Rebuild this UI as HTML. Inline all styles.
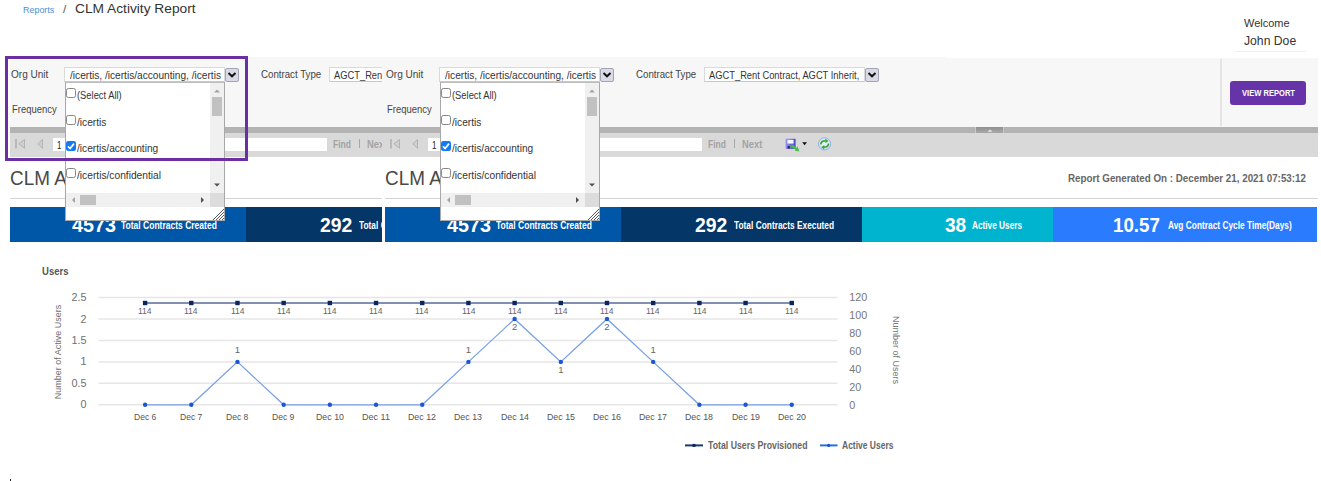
<!DOCTYPE html><html><head><meta charset="utf-8"><style>html,body{margin:0;padding:0;}body{width:1321px;height:481px;position:relative;overflow:hidden;background:#fff;font-family:"Liberation Sans",sans-serif;}.t{position:absolute;white-space:nowrap;transform-origin:0 50%;display:block;}.r{position:absolute;}</style></head><body>
<span class="t" style="left:22.90px;top:5.18px;font-size:9.59px;line-height:9.59px;color:#4a8ed8;transform:scaleX(0.9322);">Reports</span>
<span class="t" style="left:63.00px;top:3.46px;font-size:11.63px;line-height:11.63px;color:#555;">/</span>
<span class="t" style="left:75.00px;top:1.96px;font-size:13.52px;line-height:13.52px;color:#333;transform:scaleX(1.0162);">CLM Activity Report</span>
<span class="t" style="left:1243.50px;top:16.86px;font-size:11.63px;line-height:11.63px;color:#333;transform:scaleX(0.9429);">Welcome</span>
<span class="t" style="left:1243.50px;top:36.21px;font-size:11.92px;line-height:11.92px;color:#333;transform:scaleX(1.0233);">John Doe</span>
<div class="r" style="left:1235px;top:51px;width:71px;height:1px;background:#f0f0f0;"></div>
<div class="r" style="left:382px;top:57px;width:564px;height:70px;background:#f7f7f7;"></div>
<div class="r" style="left:946px;top:58px;width:372px;height:69px;background:#f7f7f7;"></div>
<div class="r" style="left:1220px;top:59px;width:2px;height:67px;background:#e4e4e4;"></div>
<div class="r" style="left:1230px;top:81px;width:76px;height:24px;background:#6633a9;border-radius:3px;"></div>
<span class="t" style="left:1241.50px;top:87.83px;font-size:9.88px;line-height:9.88px;color:#fff;font-weight:bold;transform:scaleX(0.7661);">VIEW REPORT</span>
<span class="t" style="left:386.00px;top:68.65px;font-size:11.05px;line-height:11.05px;color:#444;transform:scaleX(0.9089);">Org Unit</span>
<span class="t" style="left:386.60px;top:103.85px;font-size:11.05px;line-height:11.05px;color:#444;transform:scaleX(0.8545);">Frequency</span>
<span class="t" style="left:635.90px;top:68.65px;font-size:11.05px;line-height:11.05px;color:#444;transform:scaleX(0.8783);">Contract Type</span>
<div class="r" style="left:439px;top:67px;width:161px;height:15px;background:#fff;box-sizing:border-box;border:1px solid #dadada;border-bottom-color:#c8c8c8;"></div>
<div class="r" style="left:440px;top:67px;width:158px;height:15px;overflow:hidden;"><span class="t" style="left:4.60px;top:2.85px;font-size:11.05px;line-height:11.05px;color:#333;transform:scaleX(0.9177);">/icertis, /icertis/accounting, /icertis</span></div>
<div class="r" style="left:599.5px;top:67.5px;width:12px;height:12.4px;background:#dadae6;border:1px solid #a4a4b6;border-radius:2px;"></div><svg class="r" style="left:599.5px;top:67.5px" width="14" height="15" viewBox="0 0 14 15"><path d="M3.5 5.1 L7 8.3 L10.5 5.1" stroke="#111" stroke-width="2" fill="none"/></svg>
<div class="r" style="left:704px;top:67px;width:161px;height:15px;background:#fff;box-sizing:border-box;border:1px solid #dadada;border-bottom-color:#c8c8c8;"></div>
<div class="r" style="left:705px;top:67px;width:158px;height:15px;overflow:hidden;"><span class="t" style="left:4.00px;top:2.85px;font-size:11.05px;line-height:11.05px;color:#333;transform:scaleX(0.8451);">AGCT_Rent Contract, AGCT Inherit,</span></div>
<div class="r" style="left:865px;top:67.5px;width:12px;height:12.4px;background:#dadae6;border:1px solid #a4a4b6;border-radius:2px;"></div><svg class="r" style="left:865px;top:67.5px" width="14" height="15" viewBox="0 0 14 15"><path d="M3.5 5.1 L7 8.3 L10.5 5.1" stroke="#111" stroke-width="2" fill="none"/></svg>
<div class="r" style="left:382px;top:127px;width:936px;height:6px;background:#b3b3b3;"></div>
<div class="r" style="left:975px;top:127px;width:29px;height:6px;background:linear-gradient(#8f8f8f,#a9a9a9);box-sizing:border-box;border-left:1px solid #c8c8c8;border-right:1px solid #c8c8c8;"></div>
<svg class="r" style="left:985px;top:128px" width="10" height="5" viewBox="0 0 10 5"><path d="M2.5 3.8 L5 1.4 L7.5 3.8Z" fill="#e8e8e8"/></svg>
<div class="r" style="left:382px;top:133px;width:936px;height:24px;background:#d9d9d9;"></div>
<svg class="r" style="left:389px;top:138px" width="32" height="12" viewBox="0 0 32 12"><rect x="1" y="1" width="2" height="9.5" fill="#b9b9b9"/><path d="M10.5 1.5 L4.8 5.8 L10.5 10.2 Z" fill="#cfcfcf" stroke="#b4b4b4" stroke-width="1"/><path d="M28.5 1.5 L23.8 5.8 L28.5 10.2 Z" fill="#cfcfcf" stroke="#b4b4b4" stroke-width="1"/></svg>
<div class="r" style="left:427.5px;top:138px;width:17.5px;height:13px;background:#fff;"></div>
<span class="t" style="left:432.30px;top:138.66px;font-size:11.63px;line-height:11.63px;color:#222;transform:scaleX(0.6818);">1</span>
<div class="r" style="left:560px;top:138px;width:141.5px;height:13px;background:#fff;"></div>
<span class="t" style="left:708.00px;top:138.90px;font-size:10.76px;line-height:10.76px;color:#a3a3a3;font-weight:bold;transform:scaleX(0.7931);">Find</span>
<div class="r" style="left:734px;top:139px;width:1.2000000000000455px;height:9px;background:#a8a8a8;"></div>
<span class="t" style="left:742.00px;top:138.90px;font-size:10.76px;line-height:10.76px;color:#a3a3a3;font-weight:bold;transform:scaleX(0.8697);">Next</span>
<svg class="r" style="left:784px;top:137px" width="26" height="17" viewBox="0 0 26 17"><defs><linearGradient id="fg0" x1="0" x2="1" y1="0" y2="0"><stop offset="0" stop-color="#9494f2"/><stop offset="1" stop-color="#4848c4"/></linearGradient></defs><rect x="1.6" y="1.8" width="10" height="10.2" rx="0.6" fill="url(#fg0)"/><rect x="3.4" y="2.8" width="6.2" height="3.8" fill="#f6f6ff"/><rect x="3.6" y="9" width="2.2" height="2.6" fill="#2a2a60"/><path d="M5.8 9.4 L9 7.6 L12.2 11 L13.6 9.6 L15.4 14.6 L10.4 13.6 L11.6 12.4 Z" fill="#4cb84c"/><path d="M18.2 5.2 L23 5.2 L20.6 8.2Z" fill="#111"/></svg>
<svg class="r" style="left:817px;top:137px" width="16" height="16" viewBox="0 0 16 16"><defs><radialGradient id="rg0" cx="0.45" cy="0.4" r="0.6"><stop offset="0" stop-color="#f4f8fd"/><stop offset="1" stop-color="#c4d8f0"/></radialGradient></defs><circle cx="7.6" cy="6.9" r="6.1" fill="url(#rg0)" stroke="#94b4e2" stroke-width="1"/><path d="M3.6 7.4 C4 5 6 3.6 8.6 3.8" stroke="#3ea83e" stroke-width="1.7" fill="none"/><path d="M8.2 1.6 L11.4 3.9 L8.4 6.2Z" fill="#3ea83e"/><path d="M11.6 6.6 C11.2 9 9.4 10.2 7 10.2" stroke="#3ea83e" stroke-width="1.7" fill="none"/><path d="M7.2 8 L4.2 10.2 L7.2 12.4Z" fill="#3ea83e"/></svg>
<span class="t" style="left:385.20px;top:169.47px;font-size:19.77px;line-height:19.77px;color:#484848;transform:scaleX(0.9565);">CLM Activity Report</span>
<span class="t" style="left:1068.00px;top:172.36px;font-size:11.63px;line-height:11.63px;color:#666;font-weight:bold;transform:scaleX(0.8427);">Report Generated On : December 21, 2021 07:53:12</span>
<div class="r" style="left:385px;top:198px;width:933px;height:1px;background:#d3d3d3;"></div>
<div class="r" style="left:385px;top:207px;width:236px;height:35px;background:#0056a7;"></div>
<div class="r" style="left:621px;top:207px;width:241px;height:35px;background:#053668;"></div>
<div class="r" style="left:862px;top:207px;width:191px;height:35px;background:#00b4d0;"></div>
<div class="r" style="left:1053px;top:207px;width:264px;height:35px;background:#2b7bfe;"></div>
<span class="t" style="left:447.00px;top:215.42px;font-size:20.06px;line-height:20.06px;color:#fff;font-weight:bold;transform:scaleX(0.9837);">4573</span>
<span class="t" style="left:496.20px;top:220.59px;font-size:10.17px;line-height:10.17px;color:#fff;font-weight:bold;transform:scaleX(0.8380);">Total Contracts Created</span>
<span class="t" style="left:695.40px;top:215.42px;font-size:20.06px;line-height:20.06px;color:#fff;font-weight:bold;transform:scaleX(0.9672);">292</span>
<span class="t" style="left:733.50px;top:220.59px;font-size:10.17px;line-height:10.17px;color:#fff;font-weight:bold;transform:scaleX(0.8225);">Total Contracts Executed</span>
<span class="t" style="left:945.20px;top:215.42px;font-size:20.06px;line-height:20.06px;color:#fff;font-weight:bold;transform:scaleX(0.9522);">38</span>
<span class="t" style="left:972.00px;top:220.59px;font-size:10.17px;line-height:10.17px;color:#fff;font-weight:bold;transform:scaleX(0.8142);">Active Users</span>
<span class="t" style="left:1113.40px;top:215.42px;font-size:20.06px;line-height:20.06px;color:#fff;font-weight:bold;transform:scaleX(0.9334);">10.57</span>
<span class="t" style="left:1167.60px;top:220.59px;font-size:10.17px;line-height:10.17px;color:#fff;font-weight:bold;transform:scaleX(0.8213);">Avg Contract Cycle Time(Days)</span>
<div class="r" style="left:440px;top:82px;width:160px;height:139px;background:#fff;box-sizing:border-box;border:1px solid #a8a8a8;border-top-color:#bdbdbd;"></div>
<div class="r" style="left:440.5px;top:88.2px;width:8.2px;height:8px;border:1.1px solid #868686;border-radius:2.4px;background:#fff;"></div>
<span class="t" style="left:451.50px;top:89.95px;font-size:11.05px;line-height:11.05px;color:#333;transform:scaleX(0.8466);">(Select All)</span>
<div class="r" style="left:440.5px;top:115.2px;width:8.2px;height:8px;border:1.1px solid #868686;border-radius:2.4px;background:#fff;"></div>
<span class="t" style="left:451.50px;top:116.65px;font-size:11.05px;line-height:11.05px;color:#333;transform:scaleX(0.9178);">/icertis</span>
<div class="r" style="left:441.3px;top:141.4px;width:10.2px;height:10px;background:#1479f6;border-radius:2.2px;"></div><svg class="r" style="left:441.3px;top:141.4px" width="10" height="10" viewBox="0 0 10 10"><path d="M2 5.4 L4.1 7.5 L8 2.6" stroke="#fff" stroke-width="1.7" fill="none"/></svg>
<span class="t" style="left:451.50px;top:143.25px;font-size:11.05px;line-height:11.05px;color:#333;transform:scaleX(0.9183);">/icertis/accounting</span>
<div class="r" style="left:440.5px;top:167.7px;width:8.2px;height:8px;border:1.1px solid #868686;border-radius:2.4px;background:#fff;"></div>
<span class="t" style="left:451.50px;top:169.65px;font-size:11.05px;line-height:11.05px;color:#333;transform:scaleX(0.9245);">/icertis/confidential</span>
<div class="r" style="left:585px;top:83px;width:14px;height:110px;background:#f0f0f0;"></div>
<div class="r" style="left:587px;top:97px;width:10px;height:19px;background:#c1c1c1;"></div>
<svg class="r" style="left:585px;top:86px" width="14" height="104" viewBox="0 0 14 104"><path d="M4 6.5 L7 3.5 L10 6.5Z" fill="#a3a3a3"/><path d="M4 97.5 L7 100.5 L10 97.5Z" fill="#505050"/></svg>
<div class="r" style="left:441px;top:193px;width:144px;height:14px;background:#f0f0f0;"></div>
<div class="r" style="left:585px;top:193px;width:14px;height:14px;background:#dcdcdc;"></div>
<div class="r" style="left:454.5px;top:195px;width:16.5px;height:10px;background:#c1c1c1;"></div>
<svg class="r" style="left:441px;top:193px" width="144" height="14" viewBox="0 0 144 14"><path d="M9 4 L6 7 L9 10Z" fill="#a3a3a3"/><path d="M135 4 L138 7 L135 10Z" fill="#505050"/></svg>
<svg class="r" style="left:585px;top:207px" width="14" height="13" viewBox="0 0 14 13"><path d="M3 13 L14 2 M6 13 L14 5 M9 13 L14 8 M12 13 L14 11" stroke="#555" stroke-width="1"/></svg>
<div class="r" style="left:10px;top:50px;width:372px;height:200px;overflow:hidden;"><div class="r" style="left:-10px;top:-50px;width:1321px;height:481px;"><div class="r" style="left:7px;top:57px;width:564px;height:70px;background:#f7f7f7;"></div>
<div class="r" style="left:571px;top:58px;width:372px;height:69px;background:#f7f7f7;"></div>
<div class="r" style="left:845px;top:59px;width:2px;height:67px;background:#e4e4e4;"></div>
<div class="r" style="left:855px;top:81px;width:76px;height:24px;background:#6633a9;border-radius:3px;"></div>
<span class="t" style="left:866.50px;top:87.83px;font-size:9.88px;line-height:9.88px;color:#fff;font-weight:bold;transform:scaleX(0.7661);">VIEW REPORT</span>
<span class="t" style="left:11.00px;top:68.65px;font-size:11.05px;line-height:11.05px;color:#444;transform:scaleX(0.9089);">Org Unit</span>
<span class="t" style="left:11.60px;top:103.85px;font-size:11.05px;line-height:11.05px;color:#444;transform:scaleX(0.8545);">Frequency</span>
<span class="t" style="left:260.90px;top:68.65px;font-size:11.05px;line-height:11.05px;color:#444;transform:scaleX(0.8783);">Contract Type</span>
<div class="r" style="left:64px;top:67px;width:161px;height:15px;background:#fff;box-sizing:border-box;border:1px solid #dadada;border-bottom-color:#c8c8c8;"></div>
<div class="r" style="left:65px;top:67px;width:158px;height:15px;overflow:hidden;"><span class="t" style="left:4.60px;top:2.85px;font-size:11.05px;line-height:11.05px;color:#333;transform:scaleX(0.9177);">/icertis, /icertis/accounting, /icertis</span></div>
<div class="r" style="left:224.5px;top:67.5px;width:12px;height:12.4px;background:#dadae6;border:1px solid #a4a4b6;border-radius:2px;"></div><svg class="r" style="left:224.5px;top:67.5px" width="14" height="15" viewBox="0 0 14 15"><path d="M3.5 5.1 L7 8.3 L10.5 5.1" stroke="#111" stroke-width="2" fill="none"/></svg>
<div class="r" style="left:329px;top:67px;width:161px;height:15px;background:#fff;box-sizing:border-box;border:1px solid #dadada;border-bottom-color:#c8c8c8;"></div>
<div class="r" style="left:330px;top:67px;width:158px;height:15px;overflow:hidden;"><span class="t" style="left:4.00px;top:2.85px;font-size:11.05px;line-height:11.05px;color:#333;transform:scaleX(0.8451);">AGCT_Rent Contract, AGCT Inherit,</span></div>
<div class="r" style="left:490px;top:67.5px;width:12px;height:12.4px;background:#dadae6;border:1px solid #a4a4b6;border-radius:2px;"></div><svg class="r" style="left:490px;top:67.5px" width="14" height="15" viewBox="0 0 14 15"><path d="M3.5 5.1 L7 8.3 L10.5 5.1" stroke="#111" stroke-width="2" fill="none"/></svg>
<div class="r" style="left:7px;top:127px;width:936px;height:6px;background:#b3b3b3;"></div>
<div class="r" style="left:600px;top:127px;width:29px;height:6px;background:linear-gradient(#8f8f8f,#a9a9a9);box-sizing:border-box;border-left:1px solid #c8c8c8;border-right:1px solid #c8c8c8;"></div>
<svg class="r" style="left:610px;top:128px" width="10" height="5" viewBox="0 0 10 5"><path d="M2.5 3.8 L5 1.4 L7.5 3.8Z" fill="#e8e8e8"/></svg>
<div class="r" style="left:7px;top:133px;width:936px;height:24px;background:#d9d9d9;"></div>
<svg class="r" style="left:14px;top:138px" width="32" height="12" viewBox="0 0 32 12"><rect x="1" y="1" width="2" height="9.5" fill="#b9b9b9"/><path d="M10.5 1.5 L4.8 5.8 L10.5 10.2 Z" fill="#cfcfcf" stroke="#b4b4b4" stroke-width="1"/><path d="M28.5 1.5 L23.8 5.8 L28.5 10.2 Z" fill="#cfcfcf" stroke="#b4b4b4" stroke-width="1"/></svg>
<div class="r" style="left:52.5px;top:138px;width:17.5px;height:13px;background:#fff;"></div>
<span class="t" style="left:57.30px;top:138.66px;font-size:11.63px;line-height:11.63px;color:#222;transform:scaleX(0.6818);">1</span>
<div class="r" style="left:185px;top:138px;width:141.5px;height:13px;background:#fff;"></div>
<span class="t" style="left:333.00px;top:138.90px;font-size:10.76px;line-height:10.76px;color:#a3a3a3;font-weight:bold;transform:scaleX(0.7931);">Find</span>
<div class="r" style="left:359px;top:139px;width:1.2000000000000455px;height:9px;background:#a8a8a8;"></div>
<span class="t" style="left:367.00px;top:138.90px;font-size:10.76px;line-height:10.76px;color:#a3a3a3;font-weight:bold;transform:scaleX(0.8697);">Next</span>
<svg class="r" style="left:409px;top:137px" width="26" height="17" viewBox="0 0 26 17"><defs><linearGradient id="fg-375" x1="0" x2="1" y1="0" y2="0"><stop offset="0" stop-color="#9494f2"/><stop offset="1" stop-color="#4848c4"/></linearGradient></defs><rect x="1.6" y="1.8" width="10" height="10.2" rx="0.6" fill="url(#fg-375)"/><rect x="3.4" y="2.8" width="6.2" height="3.8" fill="#f6f6ff"/><rect x="3.6" y="9" width="2.2" height="2.6" fill="#2a2a60"/><path d="M5.8 9.4 L9 7.6 L12.2 11 L13.6 9.6 L15.4 14.6 L10.4 13.6 L11.6 12.4 Z" fill="#4cb84c"/><path d="M18.2 5.2 L23 5.2 L20.6 8.2Z" fill="#111"/></svg>
<svg class="r" style="left:442px;top:137px" width="16" height="16" viewBox="0 0 16 16"><defs><radialGradient id="rg-375" cx="0.45" cy="0.4" r="0.6"><stop offset="0" stop-color="#f4f8fd"/><stop offset="1" stop-color="#c4d8f0"/></radialGradient></defs><circle cx="7.6" cy="6.9" r="6.1" fill="url(#rg-375)" stroke="#94b4e2" stroke-width="1"/><path d="M3.6 7.4 C4 5 6 3.6 8.6 3.8" stroke="#3ea83e" stroke-width="1.7" fill="none"/><path d="M8.2 1.6 L11.4 3.9 L8.4 6.2Z" fill="#3ea83e"/><path d="M11.6 6.6 C11.2 9 9.4 10.2 7 10.2" stroke="#3ea83e" stroke-width="1.7" fill="none"/><path d="M7.2 8 L4.2 10.2 L7.2 12.4Z" fill="#3ea83e"/></svg>
<span class="t" style="left:10.20px;top:169.47px;font-size:19.77px;line-height:19.77px;color:#484848;transform:scaleX(0.9565);">CLM Activity Report</span>
<span class="t" style="left:693.00px;top:172.36px;font-size:11.63px;line-height:11.63px;color:#666;font-weight:bold;transform:scaleX(0.8427);">Report Generated On : December 21, 2021 07:53:12</span>
<div class="r" style="left:10px;top:198px;width:933px;height:1px;background:#d3d3d3;"></div>
<div class="r" style="left:10px;top:207px;width:236px;height:35px;background:#0056a7;"></div>
<div class="r" style="left:246px;top:207px;width:241px;height:35px;background:#053668;"></div>
<div class="r" style="left:487px;top:207px;width:191px;height:35px;background:#00b4d0;"></div>
<div class="r" style="left:678px;top:207px;width:264px;height:35px;background:#2b7bfe;"></div>
<span class="t" style="left:72.00px;top:215.42px;font-size:20.06px;line-height:20.06px;color:#fff;font-weight:bold;transform:scaleX(0.9837);">4573</span>
<span class="t" style="left:121.20px;top:220.59px;font-size:10.17px;line-height:10.17px;color:#fff;font-weight:bold;transform:scaleX(0.8380);">Total Contracts Created</span>
<span class="t" style="left:320.40px;top:215.42px;font-size:20.06px;line-height:20.06px;color:#fff;font-weight:bold;transform:scaleX(0.9672);">292</span>
<span class="t" style="left:358.50px;top:220.59px;font-size:10.17px;line-height:10.17px;color:#fff;font-weight:bold;transform:scaleX(0.8225);">Total Contracts Executed</span>
<span class="t" style="left:570.20px;top:215.42px;font-size:20.06px;line-height:20.06px;color:#fff;font-weight:bold;transform:scaleX(0.9522);">38</span>
<span class="t" style="left:597.00px;top:220.59px;font-size:10.17px;line-height:10.17px;color:#fff;font-weight:bold;transform:scaleX(0.8142);">Active Users</span>
<span class="t" style="left:738.40px;top:215.42px;font-size:20.06px;line-height:20.06px;color:#fff;font-weight:bold;transform:scaleX(0.9334);">10.57</span>
<span class="t" style="left:792.60px;top:220.59px;font-size:10.17px;line-height:10.17px;color:#fff;font-weight:bold;transform:scaleX(0.8213);">Avg Contract Cycle Time(Days)</span>
<div class="r" style="left:65px;top:82px;width:160px;height:139px;background:#fff;box-sizing:border-box;border:1px solid #a8a8a8;border-top-color:#bdbdbd;"></div>
<div class="r" style="left:65.5px;top:88.2px;width:8.2px;height:8px;border:1.1px solid #868686;border-radius:2.4px;background:#fff;"></div>
<span class="t" style="left:76.50px;top:89.95px;font-size:11.05px;line-height:11.05px;color:#333;transform:scaleX(0.8466);">(Select All)</span>
<div class="r" style="left:65.5px;top:115.2px;width:8.2px;height:8px;border:1.1px solid #868686;border-radius:2.4px;background:#fff;"></div>
<span class="t" style="left:76.50px;top:116.65px;font-size:11.05px;line-height:11.05px;color:#333;transform:scaleX(0.9178);">/icertis</span>
<div class="r" style="left:66.3px;top:141.4px;width:10.2px;height:10px;background:#1479f6;border-radius:2.2px;"></div><svg class="r" style="left:66.3px;top:141.4px" width="10" height="10" viewBox="0 0 10 10"><path d="M2 5.4 L4.1 7.5 L8 2.6" stroke="#fff" stroke-width="1.7" fill="none"/></svg>
<span class="t" style="left:76.50px;top:143.25px;font-size:11.05px;line-height:11.05px;color:#333;transform:scaleX(0.9183);">/icertis/accounting</span>
<div class="r" style="left:65.5px;top:167.7px;width:8.2px;height:8px;border:1.1px solid #868686;border-radius:2.4px;background:#fff;"></div>
<span class="t" style="left:76.50px;top:169.65px;font-size:11.05px;line-height:11.05px;color:#333;transform:scaleX(0.9245);">/icertis/confidential</span>
<div class="r" style="left:210px;top:83px;width:14px;height:110px;background:#f0f0f0;"></div>
<div class="r" style="left:212px;top:97px;width:10px;height:19px;background:#c1c1c1;"></div>
<svg class="r" style="left:210px;top:86px" width="14" height="104" viewBox="0 0 14 104"><path d="M4 6.5 L7 3.5 L10 6.5Z" fill="#a3a3a3"/><path d="M4 97.5 L7 100.5 L10 97.5Z" fill="#505050"/></svg>
<div class="r" style="left:66px;top:193px;width:144px;height:14px;background:#f0f0f0;"></div>
<div class="r" style="left:210px;top:193px;width:14px;height:14px;background:#dcdcdc;"></div>
<div class="r" style="left:79.5px;top:195px;width:16.5px;height:10px;background:#c1c1c1;"></div>
<svg class="r" style="left:66px;top:193px" width="144" height="14" viewBox="0 0 144 14"><path d="M9 4 L6 7 L9 10Z" fill="#a3a3a3"/><path d="M135 4 L138 7 L135 10Z" fill="#505050"/></svg>
<svg class="r" style="left:210px;top:207px" width="14" height="13" viewBox="0 0 14 13"><path d="M3 13 L14 2 M6 13 L14 5 M9 13 L14 8 M12 13 L14 11" stroke="#555" stroke-width="1"/></svg></div></div>
<div class="r" style="left:5px;top:56px;width:237px;height:99px;border:3px solid #6b2fa3;"></div>
<div class="r" style="left:8px;top:59px;width:2px;height:98px;background:#fff;"></div>
<div class="r" style="left:8px;top:59px;width:237px;height:1px;background:#fff;"></div>
<span class="t" style="left:41.70px;top:266.20px;font-size:11.34px;line-height:11.34px;color:#555;font-weight:bold;transform:scaleX(0.8408);">Users</span>
<svg class="r" style="left:0;top:0" width="1321" height="481" viewBox="0 0 1321 481">
<line x1="98.5" y1="404.80" x2="837.5" y2="404.80" stroke="#e6e6e6" stroke-width="1.5"/>
<line x1="98.5" y1="383.34" x2="837.5" y2="383.34" stroke="#e6e6e6" stroke-width="1.5"/>
<line x1="98.5" y1="361.88" x2="837.5" y2="361.88" stroke="#e6e6e6" stroke-width="1.5"/>
<line x1="98.5" y1="340.42" x2="837.5" y2="340.42" stroke="#e6e6e6" stroke-width="1.5"/>
<line x1="98.5" y1="318.96" x2="837.5" y2="318.96" stroke="#e6e6e6" stroke-width="1.5"/>
<line x1="98.5" y1="297.50" x2="837.5" y2="297.50" stroke="#e6e6e6" stroke-width="1.5"/>
<polyline points="145.10,303.0 791.76,303.0" stroke="#8090b0" stroke-width="2" fill="none"/>
<rect x="142.90" y="300.80" width="4.4" height="4.4" fill="#0b2560"/>
<rect x="189.09" y="300.80" width="4.4" height="4.4" fill="#0b2560"/>
<rect x="235.28" y="300.80" width="4.4" height="4.4" fill="#0b2560"/>
<rect x="281.47" y="300.80" width="4.4" height="4.4" fill="#0b2560"/>
<rect x="327.66" y="300.80" width="4.4" height="4.4" fill="#0b2560"/>
<rect x="373.85" y="300.80" width="4.4" height="4.4" fill="#0b2560"/>
<rect x="420.04" y="300.80" width="4.4" height="4.4" fill="#0b2560"/>
<rect x="466.23" y="300.80" width="4.4" height="4.4" fill="#0b2560"/>
<rect x="512.42" y="300.80" width="4.4" height="4.4" fill="#0b2560"/>
<rect x="558.61" y="300.80" width="4.4" height="4.4" fill="#0b2560"/>
<rect x="604.80" y="300.80" width="4.4" height="4.4" fill="#0b2560"/>
<rect x="650.99" y="300.80" width="4.4" height="4.4" fill="#0b2560"/>
<rect x="697.18" y="300.80" width="4.4" height="4.4" fill="#0b2560"/>
<rect x="743.37" y="300.80" width="4.4" height="4.4" fill="#0b2560"/>
<rect x="789.56" y="300.80" width="4.4" height="4.4" fill="#0b2560"/>
<polyline points="145.10,404.80 191.29,404.80 237.48,361.88 283.67,404.80 329.86,404.80 376.05,404.80 422.24,404.80 468.43,361.88 514.62,318.96 560.81,361.88 607.00,318.96 653.19,361.88 699.38,404.80 745.57,404.80 791.76,404.80" stroke="#78a0e6" stroke-width="1.25" fill="none"/>
<circle cx="145.10" cy="404.80" r="2.2" fill="#1a56d6"/>
<circle cx="191.29" cy="404.80" r="2.2" fill="#1a56d6"/>
<circle cx="237.48" cy="361.88" r="2.2" fill="#1a56d6"/>
<circle cx="283.67" cy="404.80" r="2.2" fill="#1a56d6"/>
<circle cx="329.86" cy="404.80" r="2.2" fill="#1a56d6"/>
<circle cx="376.05" cy="404.80" r="2.2" fill="#1a56d6"/>
<circle cx="422.24" cy="404.80" r="2.2" fill="#1a56d6"/>
<circle cx="468.43" cy="361.88" r="2.2" fill="#1a56d6"/>
<circle cx="514.62" cy="318.96" r="2.2" fill="#1a56d6"/>
<circle cx="560.81" cy="361.88" r="2.2" fill="#1a56d6"/>
<circle cx="607.00" cy="318.96" r="2.2" fill="#1a56d6"/>
<circle cx="653.19" cy="361.88" r="2.2" fill="#1a56d6"/>
<circle cx="699.38" cy="404.80" r="2.2" fill="#1a56d6"/>
<circle cx="745.57" cy="404.80" r="2.2" fill="#1a56d6"/>
<circle cx="791.76" cy="404.80" r="2.2" fill="#1a56d6"/>
<line x1="685" y1="445.4" x2="703" y2="445.4" stroke="#1d3a6b" stroke-width="2"/><rect x="692.5" y="443.9" width="3" height="3" fill="#0b2560"/>
<line x1="820" y1="445.4" x2="837.5" y2="445.4" stroke="#2a6fdb" stroke-width="2"/><circle cx="828.7" cy="445.4" r="1.6" fill="#1552d4"/>
</svg>
<span class="t" style="left:71.45px;top:292.10px;font-size:10.76px;line-height:10.76px;color:#707070;">2.5</span>
<span class="t" style="left:80.43px;top:313.56px;font-size:10.76px;line-height:10.76px;color:#707070;">2</span>
<span class="t" style="left:71.45px;top:335.02px;font-size:10.76px;line-height:10.76px;color:#707070;">1.5</span>
<span class="t" style="left:80.43px;top:356.48px;font-size:10.76px;line-height:10.76px;color:#707070;">1</span>
<span class="t" style="left:71.45px;top:377.94px;font-size:10.76px;line-height:10.76px;color:#707070;">0.5</span>
<span class="t" style="left:80.43px;top:399.40px;font-size:10.76px;line-height:10.76px;color:#707070;">0</span>
<span class="t" style="left:849.20px;top:291.80px;font-size:10.76px;line-height:10.76px;color:#777;">120</span>
<span class="t" style="left:849.20px;top:309.76px;font-size:10.76px;line-height:10.76px;color:#777;">100</span>
<span class="t" style="left:849.20px;top:327.73px;font-size:10.76px;line-height:10.76px;color:#777;">80</span>
<span class="t" style="left:849.20px;top:345.70px;font-size:10.76px;line-height:10.76px;color:#777;">60</span>
<span class="t" style="left:849.20px;top:363.66px;font-size:10.76px;line-height:10.76px;color:#777;">40</span>
<span class="t" style="left:849.20px;top:381.63px;font-size:10.76px;line-height:10.76px;color:#777;">20</span>
<span class="t" style="left:849.20px;top:399.60px;font-size:10.76px;line-height:10.76px;color:#777;">0</span>
<span class="t" style="left:133.90px;top:412.38px;font-size:9.59px;line-height:9.59px;color:#555;transform:scaleX(0.8946);">Dec 6</span>
<span class="t" style="left:138.30px;top:305.78px;font-size:9.59px;line-height:9.59px;color:#666;transform:scaleX(0.8888);">114</span>
<span class="t" style="left:180.09px;top:412.38px;font-size:9.59px;line-height:9.59px;color:#555;transform:scaleX(0.8946);">Dec 7</span>
<span class="t" style="left:184.49px;top:305.78px;font-size:9.59px;line-height:9.59px;color:#666;transform:scaleX(0.8888);">114</span>
<span class="t" style="left:226.28px;top:412.38px;font-size:9.59px;line-height:9.59px;color:#555;transform:scaleX(0.8946);">Dec 8</span>
<span class="t" style="left:230.68px;top:305.78px;font-size:9.59px;line-height:9.59px;color:#666;transform:scaleX(0.8888);">114</span>
<span class="t" style="left:272.47px;top:412.38px;font-size:9.59px;line-height:9.59px;color:#555;transform:scaleX(0.8946);">Dec 9</span>
<span class="t" style="left:276.87px;top:305.78px;font-size:9.59px;line-height:9.59px;color:#666;transform:scaleX(0.8888);">114</span>
<span class="t" style="left:315.86px;top:412.38px;font-size:9.59px;line-height:9.59px;color:#555;transform:scaleX(0.9208);">Dec 10</span>
<span class="t" style="left:323.06px;top:305.78px;font-size:9.59px;line-height:9.59px;color:#666;transform:scaleX(0.8888);">114</span>
<span class="t" style="left:362.05px;top:412.38px;font-size:9.59px;line-height:9.59px;color:#555;transform:scaleX(0.9431);">Dec 11</span>
<span class="t" style="left:369.25px;top:305.78px;font-size:9.59px;line-height:9.59px;color:#666;transform:scaleX(0.8888);">114</span>
<span class="t" style="left:408.24px;top:412.38px;font-size:9.59px;line-height:9.59px;color:#555;transform:scaleX(0.9208);">Dec 12</span>
<span class="t" style="left:415.44px;top:305.78px;font-size:9.59px;line-height:9.59px;color:#666;transform:scaleX(0.8888);">114</span>
<span class="t" style="left:454.43px;top:412.38px;font-size:9.59px;line-height:9.59px;color:#555;transform:scaleX(0.9208);">Dec 13</span>
<span class="t" style="left:461.63px;top:305.78px;font-size:9.59px;line-height:9.59px;color:#666;transform:scaleX(0.8888);">114</span>
<span class="t" style="left:500.62px;top:412.38px;font-size:9.59px;line-height:9.59px;color:#555;transform:scaleX(0.9208);">Dec 14</span>
<span class="t" style="left:507.82px;top:305.78px;font-size:9.59px;line-height:9.59px;color:#666;transform:scaleX(0.8888);">114</span>
<span class="t" style="left:546.81px;top:412.38px;font-size:9.59px;line-height:9.59px;color:#555;transform:scaleX(0.9208);">Dec 15</span>
<span class="t" style="left:554.01px;top:305.78px;font-size:9.59px;line-height:9.59px;color:#666;transform:scaleX(0.8888);">114</span>
<span class="t" style="left:593.00px;top:412.38px;font-size:9.59px;line-height:9.59px;color:#555;transform:scaleX(0.9208);">Dec 16</span>
<span class="t" style="left:600.20px;top:305.78px;font-size:9.59px;line-height:9.59px;color:#666;transform:scaleX(0.8888);">114</span>
<span class="t" style="left:639.19px;top:412.38px;font-size:9.59px;line-height:9.59px;color:#555;transform:scaleX(0.9208);">Dec 17</span>
<span class="t" style="left:646.39px;top:305.78px;font-size:9.59px;line-height:9.59px;color:#666;transform:scaleX(0.8888);">114</span>
<span class="t" style="left:685.38px;top:412.38px;font-size:9.59px;line-height:9.59px;color:#555;transform:scaleX(0.9208);">Dec 18</span>
<span class="t" style="left:692.58px;top:305.78px;font-size:9.59px;line-height:9.59px;color:#666;transform:scaleX(0.8888);">114</span>
<span class="t" style="left:731.57px;top:412.38px;font-size:9.59px;line-height:9.59px;color:#555;transform:scaleX(0.9208);">Dec 19</span>
<span class="t" style="left:738.77px;top:305.78px;font-size:9.59px;line-height:9.59px;color:#666;transform:scaleX(0.8888);">114</span>
<span class="t" style="left:777.76px;top:412.38px;font-size:9.59px;line-height:9.59px;color:#555;transform:scaleX(0.9208);">Dec 20</span>
<span class="t" style="left:784.96px;top:305.78px;font-size:9.59px;line-height:9.59px;color:#666;transform:scaleX(0.8888);">114</span>
<span class="t" style="left:234.82px;top:344.96px;font-size:9.59px;line-height:9.59px;color:#666;">1</span>
<span class="t" style="left:465.77px;top:344.96px;font-size:9.59px;line-height:9.59px;color:#666;">1</span>
<span class="t" style="left:511.96px;top:322.14px;font-size:9.59px;line-height:9.59px;color:#666;">2</span>
<span class="t" style="left:558.15px;top:365.06px;font-size:9.59px;line-height:9.59px;color:#666;">1</span>
<span class="t" style="left:604.34px;top:322.14px;font-size:9.59px;line-height:9.59px;color:#666;">2</span>
<span class="t" style="left:650.53px;top:344.96px;font-size:9.59px;line-height:9.59px;color:#666;">1</span>
<span class="t" style="left:57.5px;top:352.3px;font-size:9px;line-height:10px;color:#6e6e6e;transform-origin:50% 50%;transform:translate(-50%,-50%) rotate(-90deg);">Number of Active Users</span>
<span class="t" style="left:896px;top:350.3px;font-size:9px;line-height:10px;color:#747474;transform-origin:50% 50%;transform:translate(-50%,-50%) rotate(90deg);">Number of Users</span>
<span class="t" style="left:707.80px;top:440.99px;font-size:10.17px;line-height:10.17px;color:#666;font-weight:bold;transform:scaleX(0.8615);">Total Users Provisioned</span>
<span class="t" style="left:842.20px;top:440.99px;font-size:10.17px;line-height:10.17px;color:#666;font-weight:bold;transform:scaleX(0.8369);">Active Users</span>
<div class="r" style="left:10px;top:479px;width:1px;height:2px;background:#222;"></div>
</body></html>
